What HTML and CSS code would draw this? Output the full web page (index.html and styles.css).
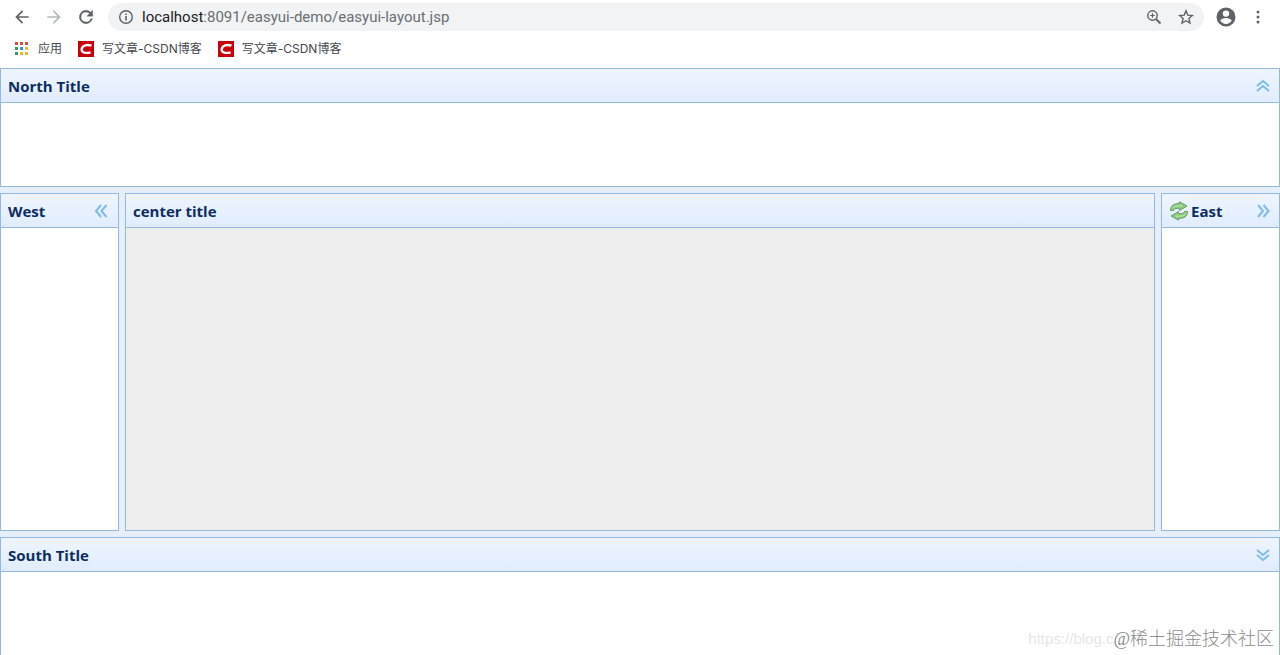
FILE: index.html
```html
<!DOCTYPE html>
<html lang="zh-CN">
<head>
<meta charset="utf-8">
<title>easyui layout</title>
<link rel="stylesheet" href="styles.css">
</head>
<body>
<header class="browser">
  <nav class="toolbar">
    <button class="tool" aria-label="Back"><svg viewBox="0 0 24 24" width="20" height="20"><path d="M20 11H7.8l5.6-5.6L12 4l-8 8 8 8 1.4-1.4L7.8 13H20z"/></svg></button>
    <button class="tool faded" aria-label="Forward"><svg viewBox="0 0 24 24" width="20" height="20"><path d="M12 4l-1.4 1.4 5.6 5.6H4v2h12.200l-5.600 5.600L12 20l8-8z"/></svg></button>
    <button class="tool" aria-label="Reload"><svg viewBox="0 0 24 24" width="20" height="20"><path d="M17.650 6.350A8 8 0 1 0 19.730 14h-2.080A6 6 0 1 1 12 6c1.660 0 3.140.69 4.220 1.780L13 11h7V4z" stroke="#5f6368" stroke-width=".5"/></svg></button>
    <div class="address">
      <svg viewBox="0 0 16 16" width="16" height="16" aria-hidden="true"><circle cx="8" cy="8" r="6.300" fill="none" stroke="#5f6368" stroke-width="1.400"/><path d="M7.200 7h1.600v4.500H7.200zM7.200 4.400h1.600V6H7.200z"/></svg>
      <span class="url"><span class="host">localhost</span>:8091/easyui-demo/easyui-layout.jsp</span>
      <button class="tool small" aria-label="Zoom"><svg viewBox="0 0 16 16" width="16" height="16"><g fill="none" stroke="#5f6368"><circle cx="6.500" cy="6.500" r="4.700" stroke-width="1.400"/><path d="M10 10l4.500 4.500" stroke-width="1.800"/><path d="M4.200 6.500h4.600M6.500 4.200v4.600" stroke-width="1.200"/></g></svg></button>
      <button class="tool small" aria-label="Bookmark"><svg viewBox="0 0 16 16" width="16" height="16"><path d="M8 1.800l1.800 4.300 4.600.4-3.500 3 1.100 4.600L8 11.700l-4 2.400 1.100-4.600-3.500-3 4.600-.4z" fill="none" stroke="#5f6368" stroke-width="1.400"/></svg></button>
    </div>
    <button class="tool account" aria-label="Profile"><svg viewBox="0 0 24 24" width="24" height="24"><path fill-rule="evenodd" d="M12 2.500a9.500 9.500 0 1 0 0 19 9.500 9.500 0 0 0 0-19zm0 2.900a3.200 3.200 0 1 1 0 6.400 3.200 3.200 0 0 1 0-6.400zm0 13.500a6.700 6.700 0 0 1-5.700-3.100c0-1.900 3.800-2.900 5.700-2.900s5.700 1 5.700 2.900a6.700 6.700 0 0 1-5.700 3.100z"/></svg></button>
    <button class="tool menu" aria-label="Menu"><svg viewBox="0 0 16 16" width="16" height="16"><circle cx="8" cy="3" r="1.500"/><circle cx="8" cy="8" r="1.500"/><circle cx="8" cy="13" r="1.500"/></svg></button>
  </nav>
  <nav class="bookmarks">
    <a class="bookmark" href="#"><svg viewBox="0 0 16 16" width="16" height="16" aria-hidden="true"><path fill="#df4a3e" d="M1 1h3v3H1zM6 1h3v3H6zM11 1h3v3h-3z"/><path fill="#2f9d5b" d="M1 6h3v3H1zM1 11h3v3H1z"/><path fill="#3c86ee" d="M6 6h3v3H6z"/><path fill="#edb72c" d="M11 6h3v3h-3zM6 11h3v3H6zM11 11h3v3h-3z"/></svg>应用</a>
    <a class="bookmark" href="#"><svg viewBox="0 0 16 16" width="16" height="16" aria-hidden="true"><path fill="#c7000b" d="M0 0h16v16H0z"/><path d="M13.500 4.700C9.500 3.300 4.300 4 3.700 8c-.5 3.900 4.500 4.600 8.900 3.300" fill="none" stroke="#fff" stroke-width="2.400"/></svg>写文章-CSDN博客</a>
    <a class="bookmark" href="#"><svg viewBox="0 0 16 16" width="16" height="16" aria-hidden="true"><path fill="#c7000b" d="M0 0h16v16H0z"/><path d="M13.500 4.700C9.500 3.300 4.300 4 3.700 8c-.5 3.900 4.500 4.600 8.900 3.300" fill="none" stroke="#fff" stroke-width="2.400"/></svg>写文章-CSDN博客</a>
  </nav>
</header>
<main class="layout">
  <section class="panel north">
    <header class="panel-header"><h2 class="title">North Title</h2><button class="collapse" aria-label="Collapse north"><svg viewBox="0 0 16 16" width="16" height="16"><path d="M2 8l6-5 6 5M2 13l6-5 6 5"/></svg></button></header>
    <div class="panel-body"></div>
  </section>
  <div class="middle">
    <section class="panel side">
      <header class="panel-header"><h2 class="title">West</h2><button class="collapse" aria-label="Collapse west"><svg viewBox="0 0 16 16" width="16" height="16"><path d="M7 2L2 8l5 6M12.500 2l-5 6 5 6"/></svg></button></header>
      <div class="panel-body"></div>
    </section>
    <section class="panel center">
      <header class="panel-header"><h2 class="title">center title</h2></header>
      <div class="panel-body"></div>
    </section>
    <section class="panel side">
      <header class="panel-header"><svg class="reload" viewBox="0 0 20 20" width="20" height="20" aria-hidden="true"><g fill="#8fcb80" stroke="#6a9b6d" stroke-linejoin="round"><path d="M1.500 9.500C1.500 4.500 5 2.500 10.500 2.500V.8L18 5l-7.500 4.500V7.500C7.500 7.200 5 7.500 4.500 9.500z"/><path d="M18.500 10.500c0 5-3.500 7-9 7v1.700L2 15l7.500-4.500v2c3 .3 5.500 0 6-2z"/></g><path d="M3.300 7.500C4.500 5 7.500 4.800 13 4.800M16.700 12.500c-1.200 2.500-4.200 2.700-9.700 2.700" fill="none" stroke="#c3edb0"/></svg><h2 class="title">East</h2><button class="collapse" aria-label="Collapse east"><svg viewBox="0 0 16 16" width="16" height="16"><path d="M3 2l5 6-5 6M8.500 2l5 6-5 6"/></svg></button></header>
      <div class="panel-body"></div>
    </section>
  </div>
  <section class="panel south">
    <header class="panel-header"><h2 class="title">South Title</h2><button class="collapse" aria-label="Collapse south"><svg viewBox="0 0 16 16" width="16" height="16"><path d="M2 3l6 5 6-5M2 8l6 5 6-5"/></svg></button></header>
    <div class="panel-body"></div>
  </section>
</main>
<div class="watermark"><span class="source">https://blog.c</span><span class="community">@稀土掘金技术社区</span></div>
</body>
</html>
```

FILE: styles.css
```css
* { box-sizing: border-box; }
body {
  margin: 0;
  height: 100vh;
  overflow: hidden;
  display: flex;
  flex-direction: column;
  background: #fff;
  font-family: "Open Sans", "Noto Sans CJK SC", sans-serif;
}
svg { display: block; flex: none; }
button { margin: 0; padding: 0; border: 0; background: none; }
.toolbar {
  display: flex;
  align-items: center;
  height: 34px;
  padding: 0 14px 0 12px;
}
.tool { display: flex; margin-right: 12px; fill: #5f6368; }
.faded { opacity: .45; }
.address {
  flex: 1;
  min-width: 0;
  display: flex;
  align-items: center;
  height: 28px;
  padding: 0 10px;
  border-radius: 14px;
  background: #f1f3f4;
  fill: #5f6368;
}
.url {
  flex: 1;
  min-width: 0;
  margin-left: 8px;
  overflow: hidden;
  white-space: nowrap;
  color: #6a6e73;
  font-family: Roboto, sans-serif;
  font-size: 15px;
  line-height: 20px;
}
.host { color: #202124; }
.small { margin: 0 0 0 16px; }
.account { margin: 0 12px 0 10px; }
.menu { margin: 0; }
.bookmarks {
  display: flex;
  align-items: center;
  gap: 16px;
  height: 30px;
  margin-bottom: 4px;
  padding-left: 14px;
}
.bookmark {
  display: flex;
  align-items: center;
  gap: 8px;
  color: #46494d;
  font-family: Inter, "Noto Sans CJK SC", sans-serif;
  font-size: 12px;
  line-height: 18px;
  text-decoration: none;
}
.layout {
  flex: 1;
  min-height: 0;
  display: flex;
  flex-direction: column;
  gap: 6px;
  background: #e6eefa;
}
.panel {
  display: flex;
  flex-direction: column;
  border: 1px solid #95b8e0;
}
.panel-header {
  display: flex;
  align-items: center;
  height: 34px;
  flex: none;
  padding: 0 8px 0 7px;
  border-bottom: 1px solid #95b8e0;
  background: linear-gradient(#eff5ff, #e0ecff);
}
.title {
  flex: 1;
  margin: 0;
  color: #0e2d5f;
  font-size: 15px;
  line-height: 20px;
}
.reload { margin-right: 2px; }
.collapse svg { fill: none; stroke: #7dbbee; stroke-width: 2; }
.panel-body { flex: 1; background: #fff; }
.north { height: 119px; }
.middle {
  flex: 1;
  min-height: 0;
  display: flex;
  gap: 6px;
}
.side { width: 119px; }
.center { flex: 1; }
.center .panel-body { background: #eee; }
.south { height: 118px; border-bottom: 0; }
.watermark {
  position: absolute;
  right: 6px;
  bottom: 4px;
  display: flex;
  align-items: center;
  white-space: nowrap;
}
.source {
  color: #e6e6e6;
  font-family: "Liberation Sans", sans-serif;
  font-size: 15px;
  line-height: 20px;
}
.community {
  color: #8c8c8c;
  font-family: "Liberation Serif", "Noto Sans CJK SC", serif;
  font-size: 18px;
  font-weight: 300;
  line-height: 24px;
}
```
